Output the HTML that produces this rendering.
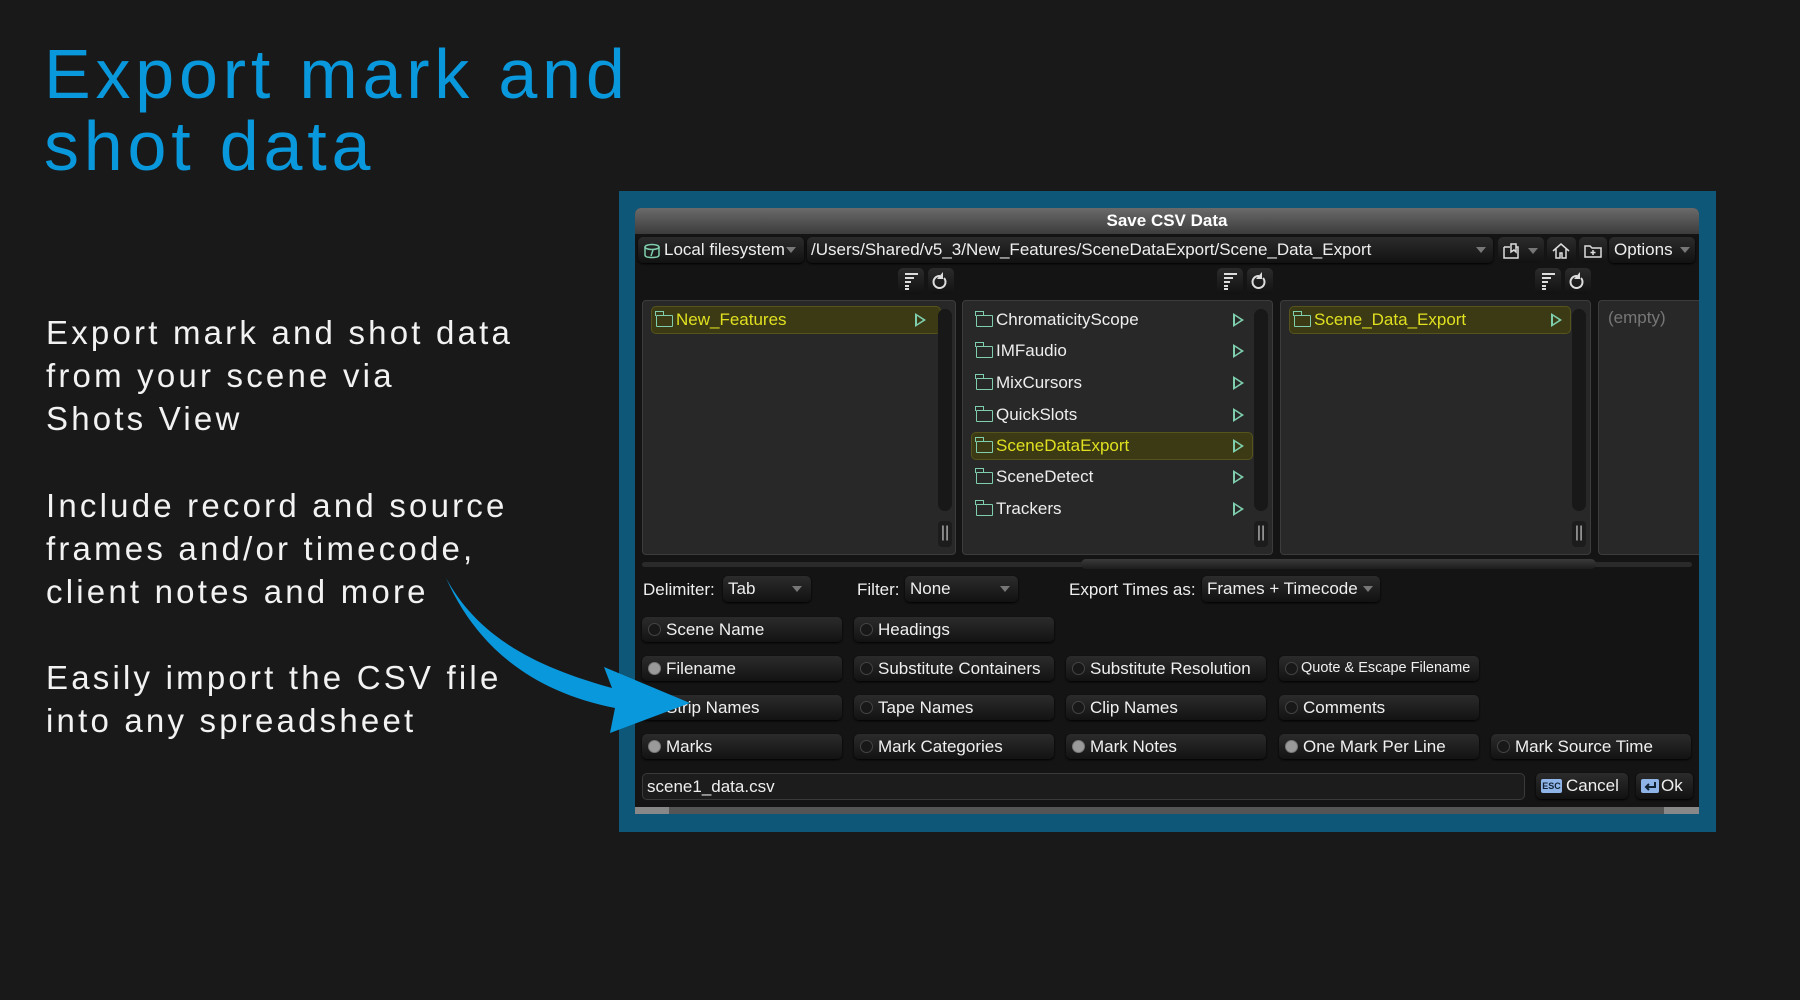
<!DOCTYPE html>
<html><head><meta charset="utf-8"><style>
*{margin:0;padding:0;box-sizing:border-box}
body{width:1800px;height:1000px;background:#191919;position:relative;overflow:hidden;font-family:"Liberation Sans",sans-serif}
.a{position:absolute;white-space:nowrap}
.h1{left:44px;top:38px;font-size:70px;line-height:72px;color:#0a98dc;letter-spacing:4.8px}
.p{left:46px;font-size:33px;line-height:43px;color:#f2f2f2;letter-spacing:3.2px}
.frame{left:619px;top:191px;width:1097px;height:641px;background:#0e5779}
.dlg{left:635px;top:208px;width:1064px;height:606px;background:#141414;border-radius:6px 6px 0 0;overflow:hidden}
.title{left:0;top:0;width:1064px;height:26px;background:linear-gradient(#6a6a6a,#3c3c3c);color:#fff;font-weight:bold;font-size:17px;text-align:center;line-height:26px}
.btn{position:absolute;white-space:nowrap;overflow:hidden;background:linear-gradient(#2c2c2c,#121212);border-radius:5px;color:#eee;font-size:17px;line-height:25px;height:26px;box-shadow:0 1px 2px #000}
.panel{position:absolute;top:92px;height:255px;background:#282828;border:1px solid #3c3c3c;border-radius:4px}
.row{position:absolute;left:8px;height:28px;color:#eee;font-size:17px;line-height:28px;padding-left:25px;white-space:nowrap}
.row.sel{background:#3b3a14;color:#e0e020;border-radius:5px;box-shadow:0 0 0 1px #55541c inset}
.fold{position:absolute;left:5px;top:9px;width:17px;height:12px;border:1.5px solid #7fcfae;border-radius:1px}
.fold:before{content:"";position:absolute;left:-2px;top:-5px;width:7px;height:4px;border:1.5px solid #7fcfae;border-bottom:none}
.tri{position:absolute;top:7px;width:0;height:0;border-left:11px solid #7fcfae;border-top:7px solid transparent;border-bottom:7px solid transparent}
.tri:after{content:"";position:absolute;left:-9px;top:-4px;border-left:6px solid #282828;border-top:4px solid transparent;border-bottom:4px solid transparent}
.sel .tri:after{border-left-color:#3b3a14}
.sb{position:absolute;top:8px;width:14px;height:202px;background:#181818;border-radius:7px}
.sbh{position:absolute;top:220px;width:14px;height:26px;background:#1c1c1c;border-radius:4px;color:#bbb;font-size:16px;text-align:center;line-height:24px}
.cb{position:absolute;white-space:nowrap;width:200px;height:25px;background:linear-gradient(#2b2b2b,#131313);border-radius:5px;color:#f0f0f0;font-size:17px;line-height:25px;padding-left:24px;box-shadow:0 1px 2px #000}
.cb i{position:absolute;left:6px;top:6px;width:13px;height:13px;border-radius:50%;background:#181818;border:1px solid #444}
.cb i.on{background:#9a9a9a;border-color:#777}
.ico{position:absolute;width:26px;height:26px;background:linear-gradient(#2c2c2c,#121212);border-radius:5px}
.dd{position:absolute;width:0;height:0;border-left:5px solid transparent;border-right:5px solid transparent;border-top:6px solid #777}
</style></head><body>
<div class="a h1">Export mark and<br>shot data</div>
<div class="a p" style="top:311px">Export mark and shot data<br>from your scene via<br>Shots View</div>
<div class="a p" style="top:484px">Include record and source<br>frames and/or timecode,<br>client notes and more</div>
<div class="a p" style="top:656px">Easily import the CSV file<br>into any spreadsheet</div>

<div class="a frame"></div>
<div class="a dlg">
 <div class="a title">Save CSV Data</div>
 <div class="btn" style="left:3px;top:29px;width:166px;padding-left:26px">Local filesystem</div>
 <svg class="a" style="left:8px;top:35px" width="18" height="16"><ellipse cx="9" cy="4" rx="7" ry="2.5" fill="none" stroke="#7fcfae" stroke-width="1.5"/><path d="M2 4v8q0 2.5 7 2.5t7-2.5V4M10 7l-2 6" fill="none" stroke="#7fcfae" stroke-width="1.5"/></svg>
 <div class="dd" style="left:151px;top:39px"></div>
 <div class="btn" style="left:172px;top:29px;width:686px;padding-left:4px">/Users/Shared/v5_3/New_Features/SceneDataExport/Scene_Data_Export</div>
 <div class="dd" style="left:841px;top:39px"></div>
 <div class="ico" style="left:863px;top:29px;width:46px"></div>
 <svg class="a" style="left:867px;top:34px" width="20" height="18"><path d="M2 5h6M2 5v11h14V5h-2M9 2h5v8l-2-2-3 2z" fill="none" stroke="#ddd" stroke-width="1.5"/></svg>
 <div class="dd" style="left:893px;top:40px"></div>
 <div class="ico" style="left:912px;top:29px;width:29px"></div>
 <svg class="a" style="left:916px;top:34px" width="20" height="18"><path d="M2 9L10 2l8 7M5 7v9h4v-5h2v5h4V7" fill="none" stroke="#ddd" stroke-width="1.5"/></svg>
 <div class="ico" style="left:944px;top:29px;width:28px"></div>
 <svg class="a" style="left:948px;top:35px" width="20" height="16"><path d="M2 3h5l2 2h9v9H2zM10 7v5M7.5 9.5h5" fill="none" stroke="#ddd" stroke-width="1.5"/></svg>
 <div class="btn" style="left:974px;top:29px;width:86px;padding-left:5px">Options</div>
 <div class="dd" style="left:1045px;top:39px"></div>

 <div class="ico" style="left:263px;top:60px"></div><div class="ico" style="left:293px;top:60px"></div>
 <div class="ico" style="left:582px;top:60px"></div><div class="ico" style="left:612px;top:60px"></div>
 <div class="ico" style="left:900px;top:60px"></div><div class="ico" style="left:930px;top:60px"></div>
 <svg class="a" style="left:263px;top:60px" width="60" height="26"><g fill="none" stroke="#ddd" stroke-width="2"><path d="M7 6h13M7 10h9M7 14h6M7 18h4M7 21h4"/><path d="M42 8a6 6 0 1 0 4 2"/></g><path d="M45 4v7h-6z" fill="#ddd"/></svg>
 <svg class="a" style="left:582px;top:60px" width="60" height="26"><g fill="none" stroke="#ddd" stroke-width="2"><path d="M7 6h13M7 10h9M7 14h6M7 18h4M7 21h4"/><path d="M42 8a6 6 0 1 0 4 2"/></g><path d="M45 4v7h-6z" fill="#ddd"/></svg>
 <svg class="a" style="left:900px;top:60px" width="60" height="26"><g fill="none" stroke="#ddd" stroke-width="2"><path d="M7 6h13M7 10h9M7 14h6M7 18h4M7 21h4"/><path d="M42 8a6 6 0 1 0 4 2"/></g><path d="M45 4v7h-6z" fill="#ddd"/></svg>

 <div class="panel" style="left:7px;width:314px">
  <div class="row sel" style="top:5px;width:290px"><span class="fold"></span>New_Features<span class="tri" style="left:264px"></span></div>
  <div class="sb" style="left:295px"></div><div class="sbh" style="left:295px">||</div>
 </div>
 <div class="panel" style="left:327px;width:311px">
  <div class="row" style="top:5px;width:250px"><span class="fold"></span>ChromaticityScope<span class="tri" style="left:262px"></span></div>
  <div class="row" style="top:36px;width:250px"><span class="fold"></span>IMFaudio<span class="tri" style="left:262px"></span></div>
  <div class="row" style="top:68px;width:250px"><span class="fold"></span>MixCursors<span class="tri" style="left:262px"></span></div>
  <div class="row" style="top:100px;width:250px"><span class="fold"></span>QuickSlots<span class="tri" style="left:262px"></span></div>
  <div class="row sel" style="top:131px;width:282px"><span class="fold"></span>SceneDataExport<span class="tri" style="left:262px"></span></div>
  <div class="row" style="top:162px;width:250px"><span class="fold"></span>SceneDetect<span class="tri" style="left:262px"></span></div>
  <div class="row" style="top:194px;width:250px"><span class="fold"></span>Trackers<span class="tri" style="left:262px"></span></div>
  <div class="sb" style="left:291px"></div><div class="sbh" style="left:291px">||</div>
 </div>
 <div class="panel" style="left:645px;width:311px">
  <div class="row sel" style="top:5px;width:282px"><span class="fold"></span>Scene_Data_Export<span class="tri" style="left:262px"></span></div>
  <div class="sb" style="left:291px"></div><div class="sbh" style="left:291px">||</div>
 </div>
 <div class="panel" style="left:963px;width:110px;border-right:none"><div class="a" style="left:9px;top:7px;color:#777;font-size:17px">(empty)</div></div>

 <div class="a" style="left:7px;top:354px;width:1050px;height:5px;background:#2a2a2a;border-radius:3px"></div>
 <div class="a" style="left:446px;top:351px;width:515px;height:10px;background:linear-gradient(#3a3a3a,#1c1c1c);border-radius:5px"></div>

 <div class="a" style="left:8px;top:370px;color:#eee;font-size:17px;line-height:24px">Delimiter:</div>
 <div class="btn" style="left:88px;top:368px;width:88px;padding-left:5px">Tab</div><div class="dd" style="left:157px;top:378px"></div>
 <div class="a" style="left:222px;top:370px;color:#eee;font-size:17px;line-height:24px">Filter:</div>
 <div class="btn" style="left:270px;top:368px;width:113px;padding-left:5px">None</div><div class="dd" style="left:365px;top:378px"></div>
 <div class="a" style="left:434px;top:370px;color:#eee;font-size:17px;line-height:24px">Export Times as:</div>
 <div class="btn" style="left:567px;top:368px;width:178px;padding-left:5px">Frames + Timecode</div><div class="dd" style="left:728px;top:378px"></div>

 <div class="cb" style="left:7px;top:409px"><i></i>Scene Name</div>
 <div class="cb" style="left:219px;top:409px"><i></i>Headings</div>
 <div class="cb" style="left:7px;top:448px"><i class="on"></i>Filename</div>
 <div class="cb" style="left:219px;top:448px"><i></i>Substitute Containers</div>
 <div class="cb" style="left:431px;top:448px"><i></i>Substitute Resolution</div>
 <div class="cb" style="left:644px;top:448px;font-size:14.5px;padding-left:22px"><i></i>Quote &amp; Escape Filename</div>
 <div class="cb" style="left:7px;top:487px"><i></i>Strip Names</div>
 <div class="cb" style="left:219px;top:487px"><i></i>Tape Names</div>
 <div class="cb" style="left:431px;top:487px"><i></i>Clip Names</div>
 <div class="cb" style="left:644px;top:487px"><i></i>Comments</div>
 <div class="cb" style="left:7px;top:526px"><i class="on"></i>Marks</div>
 <div class="cb" style="left:219px;top:526px"><i></i>Mark Categories</div>
 <div class="cb" style="left:431px;top:526px"><i class="on"></i>Mark Notes</div>
 <div class="cb" style="left:644px;top:526px"><i class="on"></i>One Mark Per Line</div>
 <div class="cb" style="left:856px;top:526px"><i></i>Mark Source Time</div>

 <div class="a" style="left:7px;top:565px;width:883px;height:27px;background:#1c1c1c;border:1px solid #3a3a3a;border-radius:5px;color:#eee;font-size:17px;line-height:25px;padding-left:4px">scene1_data.csv</div>
 <div class="btn" style="left:901px;top:565px;width:92px;padding-left:30px">Cancel</div>
 <div class="a" style="left:906px;top:571px;width:21px;height:14px;background:#8fb4e8;border-radius:2px;color:#123;font-size:9px;font-weight:bold;line-height:14px;text-align:center">ESC</div>
 <div class="btn" style="left:1001px;top:565px;width:57px;padding-left:25px">Ok</div>
 <div class="a" style="left:1006px;top:571px;width:18px;height:14px;background:#8fb4e8;border-radius:2px"></div>
 <svg class="a" style="left:1006px;top:571px" width="18" height="14"><path d="M14 3v5H6M8 5l-3 3 3 3" fill="none" stroke="#123" stroke-width="2"/></svg>

 <div class="a" style="left:0;top:599px;width:1064px;height:7px;background:#555"></div>
 <div class="a" style="left:0;top:599px;width:34px;height:7px;background:#888"></div>
 <div class="a" style="left:1029px;top:599px;width:35px;height:7px;background:#888"></div>
</div>

<svg class="a" style="left:0;top:0" width="1800" height="1000">
<path d="M446 578 C480 640 540 668 612 688 L604 667 L690 703 L610 733 L615 708 C535 692 478 650 446 578 Z" fill="#0a98dc"/>
</svg>
</body></html>
